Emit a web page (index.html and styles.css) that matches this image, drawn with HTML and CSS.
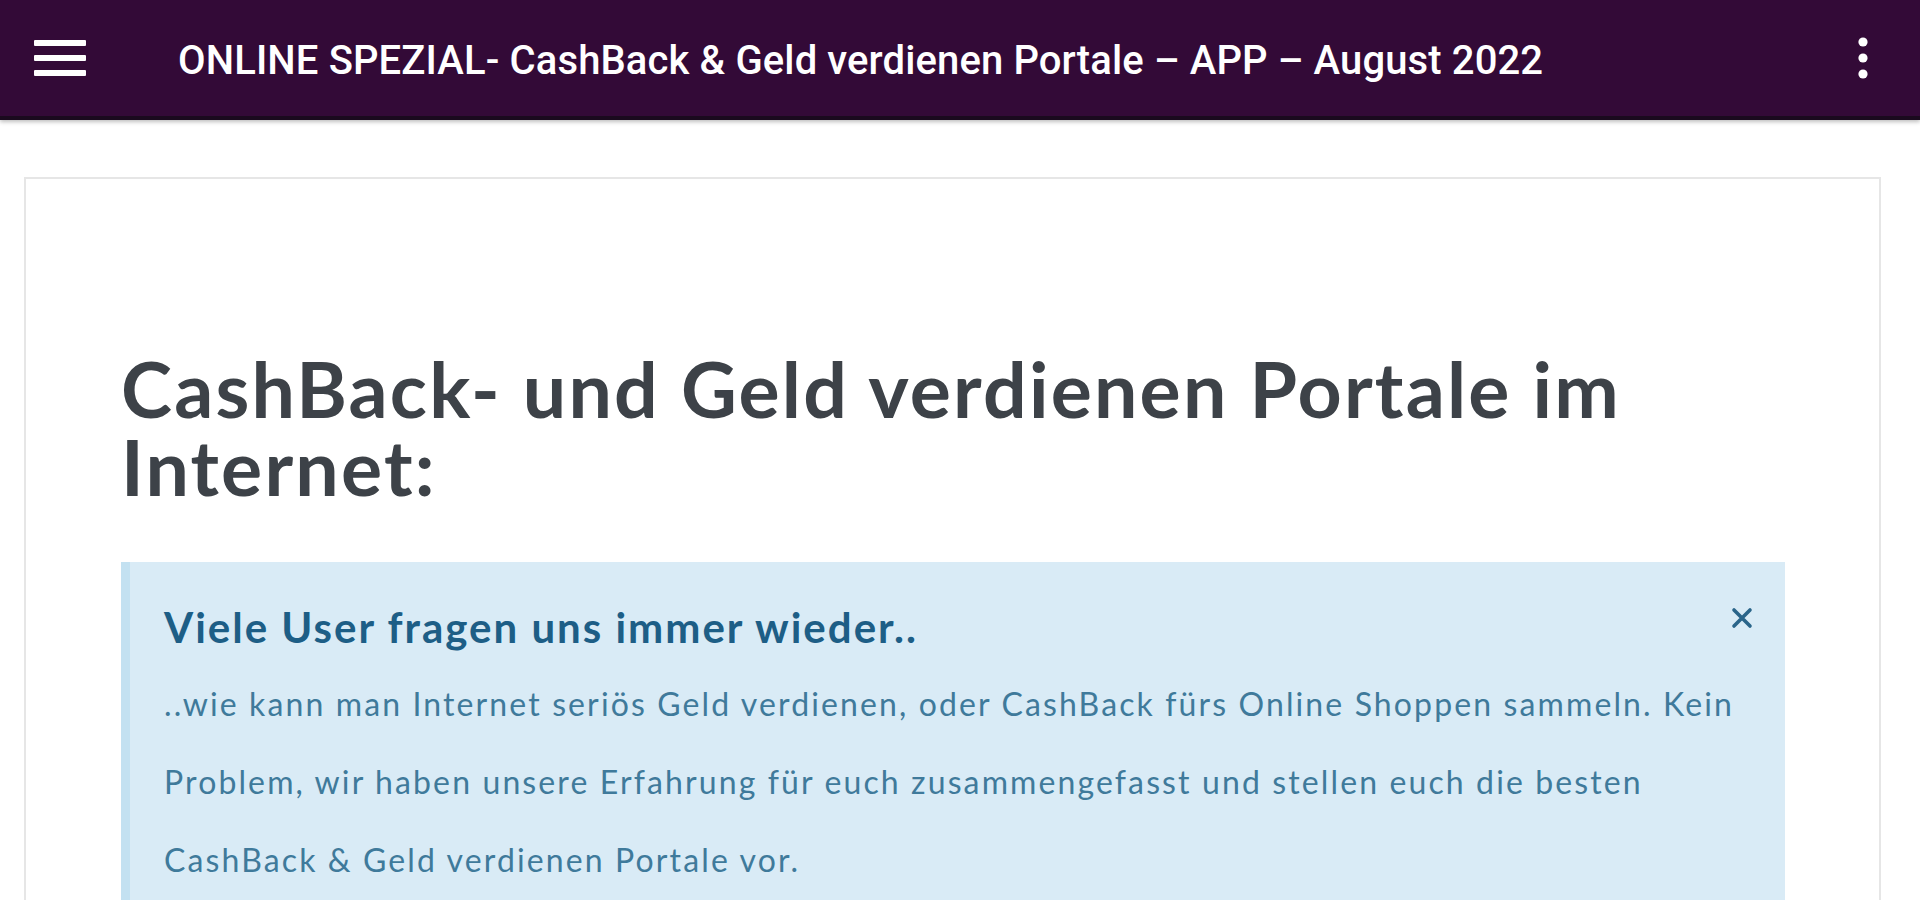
FILE: index.html
```html
<!DOCTYPE html>
<html lang="de">
<head>
<meta charset="utf-8">
<title>ONLINE SPEZIAL- CashBack &amp; Geld verdienen Portale</title>
<link rel="stylesheet" href="styles.css">
</head>
<body>
<header class="appbar">
  <button class="icon-btn menu-btn" aria-label="Menü">
    <svg width="52" height="36" viewBox="0 0 52 36"><rect x="0" y="0" width="52" height="6" rx="1" fill="#fff"/><rect x="0" y="15" width="52" height="6" rx="1" fill="#fff"/><rect x="0" y="30" width="52" height="6" rx="1" fill="#fff"/></svg>
  </button>
  <h2 class="appbar-title">ONLINE SPEZIAL- CashBack &amp; Geld verdienen Portale – APP – August 2022</h2>
  <button class="icon-btn more-btn" aria-label="Mehr">
    <svg width="10" height="42" viewBox="0 0 10 42"><circle cx="5" cy="5" r="4.6" fill="#fff"/><circle cx="5" cy="21" r="4.6" fill="#fff"/><circle cx="5" cy="37" r="4.6" fill="#fff"/></svg>
  </button>
</header>
<main class="page">
  <article class="card">
    <h1 class="headline">CashBack- und Geld verdienen Portale im Internet:</h1>
    <section class="alert">
      <div class="alert-head">
        <h3 class="alert-title">Viele User fragen uns immer wieder..</h3>
        <button class="alert-close" aria-label="Schließen">
          <svg width="22" height="22" viewBox="0 0 22 22"><path d="M3 3 L19 19 M19 3 L3 19" stroke="#2a658a" stroke-width="3.6" stroke-linecap="round"/></svg>
        </button>
      </div>
      <p class="alert-text">..wie kann man Internet seriös Geld verdienen, oder CashBack fürs Online Shoppen sammeln. Kein Problem, wir haben unsere Erfahrung für euch zusammengefasst und stellen euch die besten CashBack &amp; Geld verdienen Portale vor.</p>
    </section>
  </article>
</main>
</body>
</html>
```
FILE: styles.css
```css
html, body {
  margin: 0;
  padding: 0;
  background: #ffffff;
  height: 100%;
  overflow: hidden;
}

.appbar {
  height: 116px;
  background: #330a37;
  border-bottom: 4px solid #1a0a1e;
  box-shadow: 0 2px 4px rgba(0, 0, 0, 0.25);
  display: flex;
  align-items: center;
  padding: 0 52px 0 34px;
}

.icon-btn {
  background: none;
  border: 0;
  padding: 0;
  display: flex;
  align-items: center;
  justify-content: center;
  cursor: pointer;
}

.menu-btn {
  margin-top: 0;
}

.appbar-title {
  margin: 5px 0 0 92px;
  flex: 1;
  color: #ffffff;
  font-family: Roboto, "Liberation Sans", sans-serif;
  font-weight: 500;
  font-size: 40px;
  line-height: 48px;
  letter-spacing: 0.12px;
  white-space: nowrap;
}

.more-btn {
  margin-top: 0;
}

.page {
  padding: 57px 39px 0 24px;
}

.card {
  border: 2px solid #e6e6e6;
  border-bottom: 0;
  padding: 170px 94px 0 95px;
  min-height: 900px;
}

.headline {
  margin: 0;
  font-family: Lato, "Liberation Sans", sans-serif;
  font-weight: 700;
  font-size: 77px;
  line-height: 78px;
  letter-spacing: 2.2px;
  color: #3d4248;
}

.alert {
  margin-top: 57px;
  background: #d9ebf6;
  border-left: 9px solid #c3e1f1;
  padding: 41px 36px 40px 34px;
  color: #3a7699;
}

.alert-head {
  display: flex;
  justify-content: space-between;
  align-items: flex-start;
}

.alert-title {
  margin: 0;
  font-family: Lato, "Liberation Sans", sans-serif;
  font-weight: 700;
  font-size: 42px;
  line-height: 48px;
  letter-spacing: 2px;
  color: #1d5e86;
}

.alert-close {
  background: none;
  border: 0;
  padding: 0;
  margin-top: 4px;
  margin-right: -4px;
  display: flex;
  cursor: pointer;
}

.alert-text {
  margin: 14px 0 0 0;
  font-family: Lato, "Liberation Sans", sans-serif;
  font-weight: 400;
  font-size: 32px;
  line-height: 78px;
  letter-spacing: 2.12px;
  color: #3f7a9b;
}
```
